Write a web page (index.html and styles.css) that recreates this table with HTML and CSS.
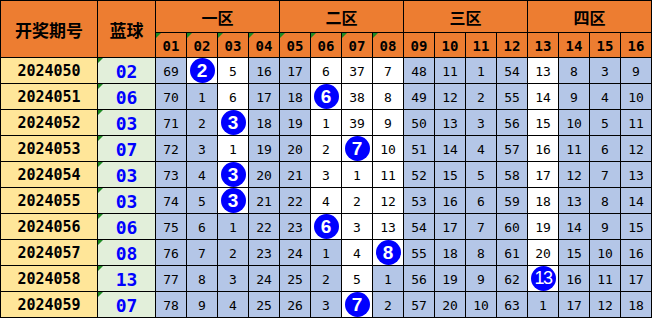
FILE: index.html
```html
<!DOCTYPE html>
<html lang="zh">
<head>
<meta charset="utf-8">
<title>开奖期号 蓝球</title>
<link rel="stylesheet" href="styles.css">
</head>
<body>
<div class="sheet">
  <div class="hd big span2">开奖期号</div>
  <div class="hd big span2">蓝球</div>
  <div class="hd zone">一区</div>
  <div class="hd zone">二区</div>
  <div class="hd zone">三区</div>
  <div class="hd zone">四区</div>
  <div class="hd num tri">01</div><div class="hd num tri">02</div><div class="hd num tri">03</div><div class="hd num tri">04</div>
  <div class="hd num tri">05</div><div class="hd num tri">06</div><div class="hd num tri">07</div><div class="hd num tri">08</div>
  <div class="hd num">09</div><div class="hd num">10</div><div class="hd num">11</div><div class="hd num">12</div>
  <div class="hd num">13</div><div class="hd num">14</div><div class="hd num">15</div><div class="hd num">16</div>

  <div class="id">2024050</div><div class="blue tri">02</div>
  <div class="n">69</div><div class="n w"><span class="ball">2</span></div><div class="n w">5</div><div class="n">16</div><div class="n">17</div><div class="n w">6</div><div class="n w">37</div><div class="n w">7</div><div class="n">48</div><div class="n">11</div><div class="n">1</div><div class="n">54</div><div class="n w">13</div><div class="n">8</div><div class="n">3</div><div class="n">9</div>

  <div class="id">2024051</div><div class="blue tri">06</div>
  <div class="n">70</div><div class="n">1</div><div class="n w">6</div><div class="n">17</div><div class="n">18</div><div class="n w"><span class="ball">6</span></div><div class="n w">38</div><div class="n w">8</div><div class="n">49</div><div class="n">12</div><div class="n">2</div><div class="n">55</div><div class="n w">14</div><div class="n">9</div><div class="n">4</div><div class="n">10</div>

  <div class="id">2024052</div><div class="blue tri">03</div>
  <div class="n">71</div><div class="n">2</div><div class="n w"><span class="ball">3</span></div><div class="n">18</div><div class="n">19</div><div class="n w">1</div><div class="n w">39</div><div class="n w">9</div><div class="n">50</div><div class="n">13</div><div class="n">3</div><div class="n">56</div><div class="n w">15</div><div class="n">10</div><div class="n">5</div><div class="n">11</div>

  <div class="id">2024053</div><div class="blue tri">07</div>
  <div class="n">72</div><div class="n">3</div><div class="n w">1</div><div class="n">19</div><div class="n">20</div><div class="n w">2</div><div class="n w"><span class="ball">7</span></div><div class="n w">10</div><div class="n">51</div><div class="n">14</div><div class="n">4</div><div class="n">57</div><div class="n w">16</div><div class="n">11</div><div class="n">6</div><div class="n">12</div>

  <div class="id">2024054</div><div class="blue tri">03</div>
  <div class="n">73</div><div class="n">4</div><div class="n w"><span class="ball">3</span></div><div class="n">20</div><div class="n">21</div><div class="n w">3</div><div class="n w">1</div><div class="n w">11</div><div class="n">52</div><div class="n">15</div><div class="n">5</div><div class="n">58</div><div class="n w">17</div><div class="n">12</div><div class="n">7</div><div class="n">13</div>

  <div class="id">2024055</div><div class="blue tri">03</div>
  <div class="n">74</div><div class="n">5</div><div class="n w"><span class="ball">3</span></div><div class="n">21</div><div class="n">22</div><div class="n w">4</div><div class="n w">2</div><div class="n w">12</div><div class="n">53</div><div class="n">16</div><div class="n">6</div><div class="n">59</div><div class="n w">18</div><div class="n">13</div><div class="n">8</div><div class="n">14</div>

  <div class="id">2024056</div><div class="blue tri">06</div>
  <div class="n">75</div><div class="n">6</div><div class="n">1</div><div class="n">22</div><div class="n">23</div><div class="n w"><span class="ball">6</span></div><div class="n w">3</div><div class="n w">13</div><div class="n">54</div><div class="n">17</div><div class="n">7</div><div class="n">60</div><div class="n w">19</div><div class="n">14</div><div class="n">9</div><div class="n">15</div>

  <div class="id">2024057</div><div class="blue tri">08</div>
  <div class="n">76</div><div class="n">7</div><div class="n">2</div><div class="n">23</div><div class="n">24</div><div class="n">1</div><div class="n w">4</div><div class="n w"><span class="ball">8</span></div><div class="n">55</div><div class="n">18</div><div class="n">8</div><div class="n">61</div><div class="n w">20</div><div class="n">15</div><div class="n">10</div><div class="n">16</div>

  <div class="id">2024058</div><div class="blue tri">13</div>
  <div class="n">77</div><div class="n">8</div><div class="n">3</div><div class="n">24</div><div class="n">25</div><div class="n">2</div><div class="n w">5</div><div class="n">1</div><div class="n">56</div><div class="n">19</div><div class="n">9</div><div class="n">62</div><div class="n w"><span class="ball two">13</span></div><div class="n">16</div><div class="n">11</div><div class="n">17</div>

  <div class="id">2024059</div><div class="blue tri">07</div>
  <div class="n">78</div><div class="n">9</div><div class="n">4</div><div class="n">25</div><div class="n">26</div><div class="n">3</div><div class="n w"><span class="ball">7</span></div><div class="n">2</div><div class="n">57</div><div class="n">20</div><div class="n">10</div><div class="n">63</div><div class="n">1</div><div class="n">17</div><div class="n">12</div><div class="n">18</div>
</div>
</body>
</html>
```

FILE: styles.css
```css
html, body {
  margin: 0;
  padding: 0;
  background: #ffffff;
}

.sheet {
  display: grid;
  grid-template-columns: 96px 57px repeat(16, 30px);
  grid-template-rows: 31px 24px repeat(10, 25px);
  gap: 1px;
  padding: 1px;
  background: #000000;
  width: 652px;
  height: 318px;
  box-sizing: border-box;
  font-family: "DejaVu Sans Mono", monospace;
  color: #000000;
}

.sheet > div {
  display: flex;
  align-items: center;
  justify-content: center;
  position: relative;
}

.hd {
  background: #ED7D31;
  font-weight: bold;
}

.big {
  font-family: "Noto Sans CJK SC", sans-serif;
  font-size: 17px;
}

.span2 {
  grid-row: span 2;
}

.zone {
  grid-column: span 4;
  font-family: "Noto Sans CJK SC", sans-serif;
  font-size: 16px;
}

.num {
  font-size: 14px;
  padding-top: 2px;
}

.id {
  background: #FFE699;
  font-weight: bold;
  font-size: 15px;
  padding-top: 1px;
}

.blue {
  background: #E2EFDA;
  color: #0000FF;
  font-weight: bold;
  font-size: 18px;
  padding-top: 1px;
}

.n {
  background: #B4C6E7;
  font-size: 13px;
  padding-top: 2px;
}

.n.w {
  background: #ffffff;
}

.tri::before {
  content: "";
  position: absolute;
  top: 0;
  left: 0;
  border-top: 5px solid #1E8B24;
  border-right: 5px solid transparent;
}

.ball {
  width: 25px;
  height: 25px;
  margin-top: -2px;
  border-radius: 50%;
  background: #0000FF;
  color: #ffffff;
  font-family: "Liberation Sans", sans-serif;
  font-weight: bold;
  font-size: 19px;
  line-height: 25px;
  text-align: center;
}

.ball.two {
  font-family: "Liberation Sans Narrow", "Liberation Sans", sans-serif;
  font-weight: normal;
  font-size: 18px;
  letter-spacing: -1.5px;
}
```
